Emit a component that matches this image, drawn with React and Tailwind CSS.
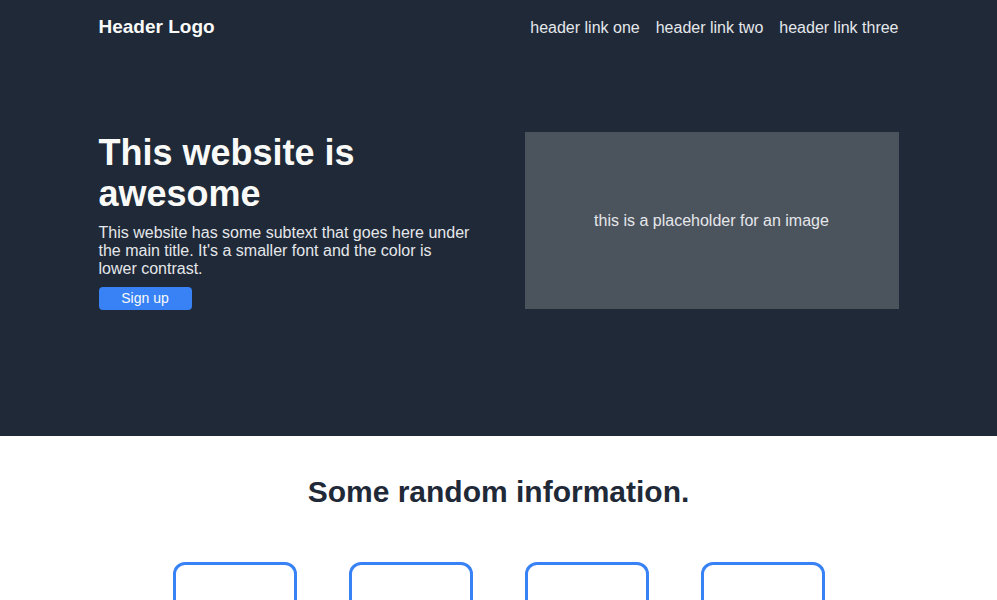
const LINKS = ["header link one", "header link two", "header link three"];
const CARDS = [1, 2, 3, 4];

const App = () => {
  return (
    <div className="min-h-screen bg-white font-['Liberation_Sans',Arial,sans-serif]">
      {/* Hero */}
      <div className="bg-[#1f2937] h-[436px]">
        <div className="w-[800px] mx-auto">
          <header className="flex items-center justify-between h-[55px]">
            <div className="text-[19px] font-bold text-[#f9faf8]">Header Logo</div>
            <nav className="flex gap-4 text-[16px] text-[#e5e7eb]">
              {LINKS.map((l) => (
                <a key={l} href="#">{l}</a>
              ))}
            </nav>
          </header>

          <div className="flex gap-[52px] pt-[77px]">
            <div className="flex-1 flex flex-col">
              <h1 className="text-[36px] font-bold leading-[41px] text-[#f9faf8]">This website is awesome</h1>
              <p className="mt-[10px] text-[16px] leading-[18px] text-[#e5e7eb]">
                This website has some subtext that goes here under the main title. It's a smaller font and the color is lower contrast.
              </p>
              <button className="mt-[9px] w-[93px] h-[23px] bg-[#3882f6] rounded text-[14px] text-[#f9faf8]">Sign up</button>
            </div>
            <div className="flex-1 h-[177px] bg-[#4b535d] flex items-center justify-center text-[16px] text-[#e5e7eb]">
              this is a placeholder for an image
            </div>
          </div>
        </div>
      </div>

      {/* Info */}
      <div className="pt-[39px]">
        <h2 className="text-center text-[30px] font-bold leading-[34px] text-[#1f2937]">Some random information.</h2>
        <div className="flex justify-center gap-[52px] mt-[53px]">
          {CARDS.map((c) => (
            <div key={c} className="w-[124px] h-[124px] border-[3px] border-[#3882f6] rounded-[12px]" />
          ))}
        </div>
      </div>
    </div>
  );
};

export default App;
